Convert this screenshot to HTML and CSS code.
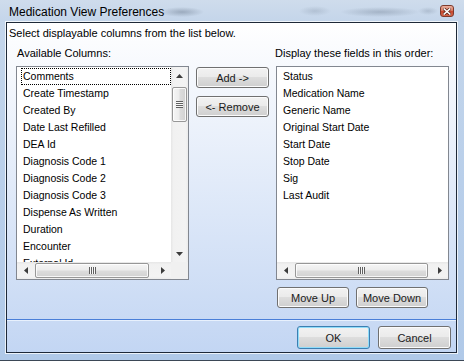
FILE: index.html
```html
<!DOCTYPE html>
<html>
<head>
<meta charset="utf-8">
<title>Medication View Preferences</title>
<link rel="stylesheet" href="styles.css">
</head>
<body>
<div class="window">
  <div class="titlebar">
    <span class="title">Medication View Preferences</span>
    <span class="close">
      <svg width="8" height="7" viewBox="0 0 8 7">
        <path d="M1.2 1 L6.8 6 M6.8 1 L1.2 6" stroke="#5a2418" stroke-width="3" stroke-linecap="square"/>
        <path d="M1.2 1 L6.8 6 M6.8 1 L1.2 6" stroke="#ffffff" stroke-width="1.6" stroke-linecap="square"/>
      </svg>
    </span>
  </div>
  <div class="client">
    <div class="instr">Select displayable columns from the list below.</div>
    <div class="main">
      <div class="col">
        <div class="label">Available Columns:</div>
        <div class="listbox both">
          <div class="items">
            <div class="item focus">Comments</div>
            <div class="item">Create Timestamp</div>
            <div class="item">Created By</div>
            <div class="item">Date Last Refilled</div>
            <div class="item">DEA Id</div>
            <div class="item">Diagnosis Code 1</div>
            <div class="item">Diagnosis Code 2</div>
            <div class="item">Diagnosis Code 3</div>
            <div class="item">Dispense As Written</div>
            <div class="item">Duration</div>
            <div class="item">Encounter</div>
            <div class="item">External Id</div>
          </div>
          <div class="vscroll">
            <div class="sbtn"><svg width="7" height="4" viewBox="0 0 7 4"><polygon points="0,4 3.5,0 7,4" fill="#3c3c3c"/></svg></div>
            <div class="vthumb"><span class="grip-h"></span></div>
            <div class="fill"></div>
            <div class="sbtn"><svg width="7" height="4" viewBox="0 0 7 4"><polygon points="0,0 7,0 3.5,4" fill="#3c3c3c"/></svg></div>
          </div>
          <div class="hscroll">
            <div class="sbtn"><svg width="4" height="7" viewBox="0 0 4 7"><polygon points="4,0 4,7 0,3.5" fill="#3c3c3c"/></svg></div>
            <div class="hthumb left-thumb"><span class="grip-v"></span></div>
            <div class="fill"></div>
            <div class="sbtn"><svg width="4" height="7" viewBox="0 0 4 7"><polygon points="0,0 0,7 4,3.5" fill="#3c3c3c"/></svg></div>
          </div>
          <div class="corner"></div>
        </div>
      </div>
      <div class="mid">
        <button class="btn">Add -&gt;</button>
        <button class="btn remove">&lt;- Remove</button>
      </div>
      <div class="col">
        <div class="label shift">Display these fields in this order:</div>
        <div class="listbox honly">
          <div class="items">
            <div class="item">Status</div>
            <div class="item">Medication Name</div>
            <div class="item">Generic Name</div>
            <div class="item">Original Start Date</div>
            <div class="item">Start Date</div>
            <div class="item">Stop Date</div>
            <div class="item">Sig</div>
            <div class="item">Last Audit</div>
          </div>
          <div class="hscroll">
            <div class="sbtn"><svg width="4" height="7" viewBox="0 0 4 7"><polygon points="4,0 4,7 0,3.5" fill="#3c3c3c"/></svg></div>
            <div class="hthumb right-thumb"><span class="grip-v"></span></div>
            <div class="fill"></div>
            <div class="sbtn"><svg width="4" height="7" viewBox="0 0 4 7"><polygon points="0,0 0,7 4,3.5" fill="#3c3c3c"/></svg></div>
          </div>
        </div>
        <div class="movebar">
          <button class="btn move up">Move Up</button>
          <button class="btn move down">Move Down</button>
        </div>
      </div>
    </div>
    <div class="sep"></div>
    <div class="footer">
      <button class="btn tall default">OK</button>
      <button class="btn tall">Cancel</button>
    </div>
  </div>
</div>
</body>
</html>
```

FILE: styles.css
```css
html, body {
  margin: 0;
  padding: 0;
}
body {
  width: 464px;
  height: 361px;
  overflow: hidden;
  font-family: "Liberation Sans", Arial, sans-serif;
  color: #000;
}
.window {
  width: 464px;
  height: 361px;
  box-sizing: border-box;
  padding: 0 7px 8px 6px;
  display: flex;
  flex-direction: column;
  background: linear-gradient(to bottom, #c6d7eb 0%, #b9cfea 50%, #b0c9e8 100%);
  border-bottom: 1px solid #3b4756;
}
.titlebar {
  height: 22px;
  flex: none;
  margin: 0 -7px 0 -6px;
  padding: 2px 10px 0 9px;
  box-sizing: border-box;
  display: flex;
  justify-content: space-between;
  align-items: flex-start;
  background:
    radial-gradient(ellipse 22px 5px at 182px 12px, rgba(70, 85, 105, 0.35), rgba(70, 85, 105, 0) 100%),
    radial-gradient(ellipse 40px 5px at 380px 12px, rgba(70, 85, 105, 0.28), rgba(70, 85, 105, 0) 100%),
    radial-gradient(ellipse 16px 5px at 315px 11px, rgba(70, 85, 105, 0.18), rgba(70, 85, 105, 0) 100%),
    radial-gradient(ellipse 10px 4px at 428px 11px, rgba(70, 85, 105, 0.2), rgba(70, 85, 105, 0) 100%),
    linear-gradient(to bottom, #cfdcec 0%, #c4d5ea 100%);
}
.title {
  font-size: 12px;
  line-height: 20px;
  color: #000;
}
.close {
  margin-top: 3px;
  width: 14px;
  height: 12px;
  box-sizing: border-box;
  border: 1px solid #7e3a2c;
  border-radius: 3px;
  background: linear-gradient(to bottom, #eab0a0 0%, #d97a62 45%, #c6482f 55%, #d5654a 100%);
  display: flex;
  align-items: center;
  justify-content: center;
}
.close svg {
  display: block;
}
.client {
  width: 451px;
  height: 331px;
  flex: none;
  box-sizing: border-box;
  border: 1px solid #1e2938;
  box-shadow: 0 0 0 1px rgba(255, 255, 255, 0.75);
  background: linear-gradient(to bottom, #ffffff 0%, #fbfcfe 6%, #c3d6f3 100%);
  display: flex;
  flex-direction: column;
  font-size: 11px;
}
.instr {
  margin-top: 4px;
  height: 13px;
  line-height: 13px;
  padding-left: 2px;
  white-space: nowrap;
}
.main {
  margin-top: 7px;
  padding-left: 9px;
  display: flex;
  align-items: flex-start;
}
.col {
  width: 173px;
  display: flex;
  flex-direction: column;
}
.col + .mid,
.mid + .col {
  margin-left: 7px;
}
.label {
  height: 13px;
  line-height: 13px;
  padding-left: 1px;
  white-space: nowrap;
}
.label.shift {
  padding-left: 0;
  margin-left: -1px;
}
.listbox {
  margin-top: 6px;
  width: 173px;
  height: 214px;
  box-sizing: border-box;
  border: 1px solid #828790;
  background: #ffffff;
  display: grid;
}
.listbox.both {
  grid-template-columns: 1fr 17px;
  grid-template-rows: 1fr 17px;
}
.listbox.honly {
  grid-template-columns: 1fr;
  grid-template-rows: 1fr 17px;
}
.items {
  padding: 1px 0 0 4px;
  overflow: hidden;
  min-width: 0;
  min-height: 0;
}
.item {
  height: 17px;
  line-height: 15px;
  box-sizing: border-box;
  border: 1px solid transparent;
  padding-left: 1px;
  font-size: 10.5px;
  white-space: nowrap;
}
.item.focus {
  border: 1px dotted #000;
}
.vscroll {
  display: flex;
  flex-direction: column;
  background: linear-gradient(to right, #e6e6e6 0%, #f1f1f1 15%, #f3f3f3 85%, #ececec 100%);
}
.hscroll {
  display: flex;
  flex-direction: row;
  background: linear-gradient(to bottom, #e6e6e6 0%, #f1f1f1 15%, #f3f3f3 85%, #ececec 100%);
}
.corner {
  background: #f0f0f0;
}
.sbtn {
  width: 17px;
  height: 17px;
  flex: none;
  display: flex;
  align-items: center;
  justify-content: center;
}
.sbtn svg {
  display: block;
}
.fill {
  flex: 1;
}
.vthumb {
  margin: 3px 1px 0 1px;
  height: 35px;
  box-sizing: border-box;
  border: 1px solid #979797;
  border-radius: 2px;
  background: linear-gradient(to right, #f5f5f5 0%, #ececec 48%, #dcdcdc 52%, #d2d2d2 100%);
  box-shadow: inset 0 0 0 1px rgba(255, 255, 255, 0.8);
  display: flex;
  align-items: center;
  justify-content: center;
}
.hthumb {
  margin: 1px 0 1px 1px;
  box-sizing: border-box;
  border: 1px solid #979797;
  border-radius: 2px;
  background: linear-gradient(to bottom, #f5f5f5 0%, #ececec 48%, #dcdcdc 52%, #d2d2d2 100%);
  box-shadow: inset 0 0 0 1px rgba(255, 255, 255, 0.8);
  display: flex;
  align-items: center;
  justify-content: center;
}
.left-thumb {
  width: 114px;
}
.right-thumb {
  width: 133px;
}
.grip-h {
  width: 7px;
  height: 7px;
  background: repeating-linear-gradient(to bottom, #606060 0 1px, #f8f8f8 1px 2px);
}
.grip-v {
  width: 7px;
  height: 7px;
  background: repeating-linear-gradient(to right, #606060 0 1px, #f8f8f8 1px 2px);
}
.mid {
  width: 73px;
  padding-top: 20px;
  display: flex;
  flex-direction: column;
}
.btn {
  width: 73px;
  height: 21px;
  box-sizing: border-box;
  padding: 0;
  margin: 0;
  font-family: "Liberation Sans", Arial, sans-serif;
  font-size: 11px;
  font-weight: 400;
  color: #1a1a1a;
  border: 1px solid #707070;
  border-radius: 3px;
  background: linear-gradient(to bottom, #f2f2f2 0%, #ebebeb 46%, #dddddd 50%, #cfcfcf 100%);
  box-shadow: inset 0 0 0 1px #fbfbfb;
}
.btn.remove {
  margin-top: 8px;
}
.movebar {
  margin-top: 7px;
  display: flex;
}
.btn.move {
  width: 72px;
}
.btn.up {
  margin-left: 1px;
}
.btn.down {
  margin-left: 7px;
}
.sep {
  margin-top: 11px;
  height: 1px;
  flex: none;
  background: #4a7fd8;
  box-shadow: 0 1px 0 rgba(240, 246, 255, 0.8);
}
.footer {
  margin-top: 6px;
  padding-right: 5px;
  display: flex;
  justify-content: flex-end;
  gap: 8px;
}
.btn.tall {
  height: 23px;
}
.btn.default {
  border-color: #3c7fb1;
  box-shadow: inset 0 0 0 1px #8fdcfa;
}
```
